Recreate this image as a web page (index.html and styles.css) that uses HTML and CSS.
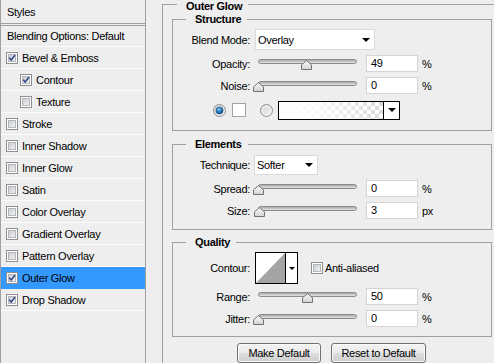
FILE: index.html
```html
<!DOCTYPE html>
<html lang="en">
<head>
<meta charset="utf-8">
<title>Layer Style - Outer Glow</title>
<link rel="stylesheet" href="styles.css">
</head>
<body>
<svg class="defs" aria-hidden="true" width="0" height="0">
  <defs>
    <linearGradient id="gBox" x1="0" y1="0" x2="1" y2="1">
      <stop offset="0" stop-color="#c6c9ce"/>
      <stop offset="1" stop-color="#f5f5f5"/>
    </linearGradient>
    <linearGradient id="gRadio" x1="0" y1="0" x2="1" y2="1">
      <stop offset="0" stop-color="#cfcfcf"/>
      <stop offset="1" stop-color="#f8f8f8"/>
    </linearGradient>
    <radialGradient id="gDot" cx="0.4" cy="0.35" r="0.75">
      <stop offset="0" stop-color="#8fd0f7"/>
      <stop offset="0.45" stop-color="#2a7fc4"/>
      <stop offset="1" stop-color="#0d3a6b"/>
    </radialGradient>
    <linearGradient id="gThumb" x1="0" y1="0" x2="0" y2="1">
      <stop offset="0" stop-color="#fbfbfb"/>
      <stop offset="1" stop-color="#d2d2d2"/>
    </linearGradient>
    <symbol id="cb" viewBox="0 0 12 12">
      <rect x="0.5" y="0.5" width="11" height="11" fill="#fff" stroke="#8f8f8f"/>
      <rect x="2.5" y="2.5" width="7" height="7" fill="url(#gBox)" stroke="#b3b6ba"/>
    </symbol>
    <symbol id="cbOn" viewBox="0 0 12 12">
      <rect x="0.5" y="0.5" width="11" height="11" fill="#fff" stroke="#8f8f8f"/>
      <rect x="2.5" y="2.5" width="7" height="7" fill="url(#gBox)" stroke="#b3b6ba"/>
      <path d="M3.3 5.6 L5.2 8.1 L8.9 3.1" fill="none" stroke="#263c86" stroke-width="1.5"/>
    </symbol>
    <symbol id="radio" viewBox="0 0 13 13">
      <circle cx="6.5" cy="6.5" r="6" fill="url(#gRadio)" stroke="#8f8f8f"/>
      <circle cx="6.5" cy="6.5" r="4.5" fill="none" stroke="#f4f4f4"/>
    </symbol>
    <symbol id="radioOn" viewBox="0 0 13 13">
      <circle cx="6.5" cy="6.5" r="6" fill="url(#gRadio)" stroke="#8f8f8f"/>
      <circle cx="6.5" cy="6.5" r="3.6" fill="url(#gDot)" stroke="#1d4f86" stroke-width="0.6"/>
    </symbol>
    <symbol id="thumb" viewBox="0 0 11 10">
      <path d="M5.5 0.6 L10.5 4.8 L10.5 9.5 L0.5 9.5 L0.5 4.8 Z" fill="url(#gThumb)" stroke="#727272"/>
    </symbol>
  </defs>
</svg>

<div class="app">
  <aside class="styles-list">
    <div class="item head">Styles</div>
    <div class="item blend">Blending Options: Default</div>
    <div class="item"><svg class="cb"><use href="#cbOn"/></svg><span>Bevel &amp; Emboss</span></div>
    <div class="item sub"><svg class="cb"><use href="#cbOn"/></svg><span>Contour</span></div>
    <div class="item sub"><svg class="cb"><use href="#cb"/></svg><span>Texture</span></div>
    <div class="item"><svg class="cb"><use href="#cb"/></svg><span>Stroke</span></div>
    <div class="item"><svg class="cb"><use href="#cb"/></svg><span>Inner Shadow</span></div>
    <div class="item"><svg class="cb"><use href="#cb"/></svg><span>Inner Glow</span></div>
    <div class="item"><svg class="cb"><use href="#cb"/></svg><span>Satin</span></div>
    <div class="item"><svg class="cb"><use href="#cb"/></svg><span>Color Overlay</span></div>
    <div class="item"><svg class="cb"><use href="#cb"/></svg><span>Gradient Overlay</span></div>
    <div class="item"><svg class="cb"><use href="#cb"/></svg><span>Pattern Overlay</span></div>
    <div class="item sel"><svg class="cb"><use href="#cbOn"/></svg><span>Outer Glow</span></div>
    <div class="item"><svg class="cb"><use href="#cbOn"/></svg><span>Drop Shadow</span></div>
  </aside>

  <main class="panel">
    <fieldset class="grp outer">
      <legend>Outer Glow</legend>

      <fieldset class="grp inner structure">
        <legend>Structure</legend>
        <div class="rows">
          <div class="row row-dd">
            <span class="lbl">Blend Mode:</span>
            <div class="dd dd-blend"><span>Overlay</span><i class="arrow"></i></div>
          </div>
          <div class="row">
            <span class="lbl">Opacity:</span>
            <div class="slider"><div class="track"></div><svg class="thumb" style="left:48px"><use href="#thumb"/></svg></div>
            <div class="num">49</div><span class="unit">%</span>
          </div>
          <div class="row">
            <span class="lbl">Noise:</span>
            <div class="slider"><div class="track"></div><svg class="thumb" style="left:0px"><use href="#thumb"/></svg></div>
            <div class="num">0</div><span class="unit">%</span>
          </div>
          <div class="color-row">
            <svg class="radio"><use href="#radioOn"/></svg>
            <div class="swatch"></div>
            <svg class="radio radio2"><use href="#radio"/></svg>
            <div class="grad"><div class="grad-fill"></div><div class="grad-btn"><i class="arrow"></i></div></div>
          </div>
        </div>
      </fieldset>

      <fieldset class="grp inner elements">
        <legend>Elements</legend>
        <div class="rows">
          <div class="row row-dd2">
            <span class="lbl">Technique:</span>
            <div class="dd dd-tech"><span>Softer</span><i class="arrow"></i></div>
          </div>
          <div class="row">
            <span class="lbl">Spread:</span>
            <div class="slider"><div class="track"></div><svg class="thumb" style="left:0px"><use href="#thumb"/></svg></div>
            <div class="num">0</div><span class="unit">%</span>
          </div>
          <div class="row">
            <span class="lbl">Size:</span>
            <div class="slider"><div class="track"></div><svg class="thumb" style="left:1px"><use href="#thumb"/></svg></div>
            <div class="num">3</div><span class="unit">px</span>
          </div>
        </div>
      </fieldset>

      <fieldset class="grp inner quality">
        <legend>Quality</legend>
        <div class="rows">
          <div class="row contour-row">
            <span class="lbl">Contour:</span>
            <div class="contour">
              <svg class="contour-pic" viewBox="0 0 29 30"><polygon points="0,30 29,0 29,30" fill="#a4a4a4"/></svg>
              <div class="contour-btn"><i class="arrow small"></i></div>
            </div>
            <label class="aa"><svg class="cb"><use href="#cb"/></svg><span>Anti-aliased</span></label>
          </div>
          <div class="row row-range">
            <span class="lbl">Range:</span>
            <div class="slider"><div class="track"></div><svg class="thumb" style="left:49px"><use href="#thumb"/></svg></div>
            <div class="num">50</div><span class="unit">%</span>
          </div>
          <div class="row">
            <span class="lbl">Jitter:</span>
            <div class="slider"><div class="track"></div><svg class="thumb" style="left:0px"><use href="#thumb"/></svg></div>
            <div class="num">0</div><span class="unit">%</span>
          </div>
        </div>
      </fieldset>

      <div class="buttons">
        <button class="btn btn-make" type="button">Make Default</button>
        <button class="btn btn-reset" type="button">Reset to Default</button>
      </div>
    </fieldset>
  </main>
</div>
</body>
</html>
```

FILE: styles.css
```css
* { box-sizing: border-box; }
html, body { margin: 0; padding: 0; }
body {
  width: 494px;
  height: 363px;
  overflow: hidden;
  background: #eeeeee;
  font-family: "Liberation Sans", Arial, sans-serif;
  font-size: 11px;
  letter-spacing: -0.3px;
  color: #000;
}
.defs { display: block; width: 0; height: 0; overflow: hidden; }

.app { display: flex; height: 363px; }

/* left styles list */
.styles-list {
  flex: none;
  width: 146px;
  height: 363px;
  border-left: 1px solid #a0a0a0;
  border-right: 1px solid #a0a0a0;
}
.item {
  display: flex;
  align-items: center;
  gap: 4px;
  height: 22px;
  padding-left: 5px;
  border-bottom: 1px solid #fbfbfb;
  white-space: nowrap;
}
.item.head { height: 26px; padding-left: 6px; border-bottom: 3px double #a0a0a0; }
.item.blend { height: 21px; padding-left: 6px; }
.item.sub { padding-left: 19px; }
.item.sel { background: #3399ff; border-bottom-color: #3399ff; }
.cb { flex: none; width: 12px; height: 12px; }

/* right panel */
.panel { flex: 1; min-width: 0; height: 363px; padding-left: 16px; overflow: hidden; }

.grp {
  margin: 0;
  padding: 0;
  border: 1px solid #a0a0a0;
  min-width: 0;
}
.grp > legend {
  height: 13px;
  line-height: 13px;
  font-weight: bold;
  padding: 0 6px 0 9px;
  margin-left: 13px;
}
.outer {
  width: 332px;
  height: 363px;
  margin-top: 0;
  padding: 4px 0 0 9px;
  border-right: 0;
  border-bottom: 0;
}
.outer > legend { margin-left: 5px; height: 9px; line-height: 12px; }

.inner { width: 320px; }
.structure { padding: 3px 0 11px; }
.elements { margin-top: 7px; padding: 4px 0 10px; }
.quality { margin-top: 6px; padding: 3px 0 9px; }

.rows { display: flex; flex-direction: column; gap: 5px; }
.row { display: flex; align-items: center; height: 17px; }
.row-dd { height: 21px; }
.row-dd2 { height: 20px; }
.contour-row { height: 32px; }
.row-range { margin-top: -1px; }

.lbl {
  flex: none;
  width: 80px;
  padding-right: 3px;
  text-align: right;
}

.slider { flex: none; position: relative; width: 109px; height: 17px; }
.track {
  margin: 4px 5px 0;
  height: 5px;
  border: 1px solid #8b8b8b;
  border-radius: 3px;
  background: linear-gradient(#a8a8a8, #e4e4e4);
}
.thumb { position: absolute; top: 5px; width: 11px; height: 10px; }

.num {
  flex: none;
  margin-left: 4px;
  width: 52px;
  height: 17px;
  background: #fff;
  border: 1px solid #d4d4d4;
  padding-left: 4px;
  line-height: 15px;
}
.unit { margin-left: 4px; }

.dd {
  flex: none;
  display: flex;
  align-items: center;
  justify-content: space-between;
  background: #fff;
  border: 1px solid #dadada;
  padding: 0 4px 0 2px;
}
.dd-blend { margin-left: 2px; width: 120px; height: 21px; }
.dd-tech { margin-left: 1px; width: 64px; height: 20px; }
.arrow {
  display: block;
  width: 0;
  height: 0;
  border-left: 4px solid transparent;
  border-right: 4px solid transparent;
  border-top: 4px solid #000;
}
.arrow.small {
  border-left-width: 3px;
  border-right-width: 3px;
  border-top-width: 3px;
}

.color-row {
  display: flex;
  align-items: center;
  height: 18px;
  margin-top: 2px;
  padding-left: 40px;
}
.radio { flex: none; width: 13px; height: 13px; }
.radio2 { margin-left: 14px; }
.swatch {
  flex: none;
  margin-left: 6px;
  width: 14px;
  height: 14px;
  background: #fff;
  border: 1px solid #a3a3a3;
}
.grad {
  flex: none;
  display: flex;
  margin-left: 5px;
  width: 122px;
  height: 19px;
  border: 1px solid #000;
}
.grad-fill {
  flex: 1;
  background:
    linear-gradient(to right, #fff 0%, rgba(255,255,255,0.85) 35%, rgba(255,255,255,0) 100%),
    repeating-conic-gradient(#d9d9d9 0 25%, #ffffff 0 50%) 0 0 / 8px 8px;
}
.grad-btn {
  flex: none;
  width: 16px;
  border-left: 1px solid #000;
  background: #fff;
  display: flex;
  align-items: center;
  justify-content: center;
}

.contour {
  flex: none;
  display: flex;
  margin-left: 2px;
  width: 43px;
  height: 32px;
  border: 1px solid #000;
  background: #fff;
}
.contour-pic { flex: none; width: 29px; height: 30px; display: block; }
.contour-btn {
  flex: 1;
  border-left: 1px solid #000;
  display: flex;
  justify-content: center;
  padding-top: 14px;
}
.aa { display: flex; align-items: center; gap: 2px; margin-left: 13px; }

.buttons {
  display: flex;
  gap: 10px;
  margin-top: 6px;
  padding-left: 65px;
}
.btn {
  flex: none;
  height: 20px;
  margin: 0;
  padding: 0;
  font: inherit;
  letter-spacing: inherit;
  color: #000;
  border: 1px solid #707070;
  border-radius: 3px;
  background: linear-gradient(#f3f3f3 0%, #ebebeb 48%, #dddddd 52%, #cfcfcf 100%);
  box-shadow: inset 0 0 0 1px #fbfbfb;
}
.btn-make { width: 84px; }
.btn-reset { width: 95px; }
```
